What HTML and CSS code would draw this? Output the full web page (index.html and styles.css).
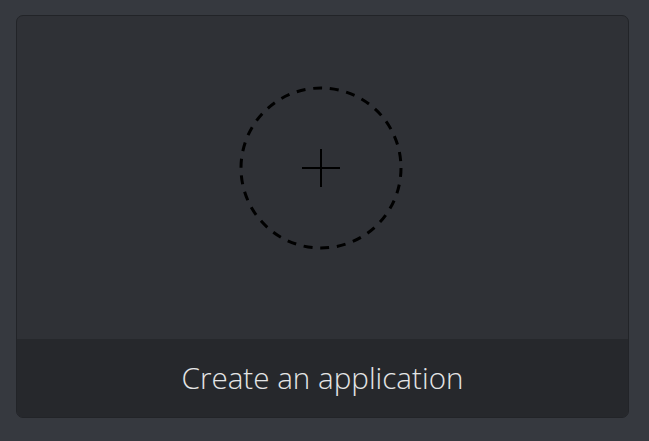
FILE: index.html
```html
<!DOCTYPE html>
<html>
<head>
<meta charset="utf-8">
<link rel="stylesheet" href="styles.css">
</head>
<body>
<div class="card">
  <div class="card-top">
    <svg class="add-icon" width="166" height="166" viewBox="0 0 166 166">
      <circle cx="83" cy="83" r="80" fill="none" stroke="#000" stroke-width="3" stroke-dasharray="9 7.75"/>
      <line x1="64" y1="83" x2="102" y2="83" stroke="#000" stroke-width="2"/>
      <line x1="83" y1="64" x2="83" y2="102" stroke="#000" stroke-width="2"/>
    </svg>
  </div>
  <div class="card-bottom">Create an application</div>
</div>
</body>
</html>
```
FILE: styles.css
```css
html, body {
  margin: 0;
  padding: 0;
  background: #36393f;
}
body {
  padding: 15px 20px 23px 16px;
}
.card {
  width: 613px;
  height: 403px;
  box-sizing: border-box;
  border: 1px solid #222428;
  border-radius: 7px;
  overflow: hidden;
  display: flex;
  flex-direction: column;
  background: #2f3136;
}
.card-top {
  flex: 1;
  display: flex;
  align-items: center;
  justify-content: center;
  padding-bottom: 20px;
  padding-right: 3px;
}
.add-icon {
  display: block;
}
.card-bottom {
  height: 78px;
  background: #26282c;
  color: #e4e5e6;
  font-family: "Open Sans", sans-serif;
  font-weight: 300;
  font-size: 29.6px;
  display: flex;
  align-items: center;
  justify-content: center;
  padding-bottom: 2px;
  box-sizing: border-box;
}
```
